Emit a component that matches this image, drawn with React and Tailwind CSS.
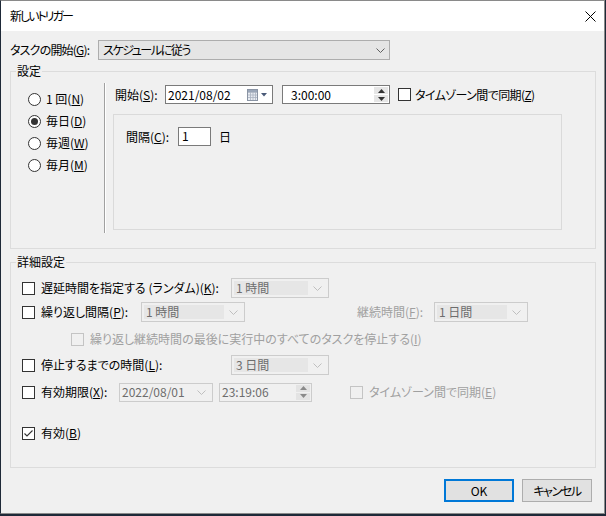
import React from 'react';

const font = "font-['Noto_Sans_CJK_JP',sans-serif] [font-feature-settings:'palt']";

function Chevron({ color = '#606060' }) {
  return (
    <svg width="9" height="5" viewBox="0 0 9 5">
      <path d="M0.5 0.5 L4.5 4.5 L8.5 0.5" fill="none" stroke={color} strokeWidth="1" />
    </svg>
  );
}

function Check({ checked, disabled }) {
  return (
    <span
      className={`w-[13px] h-[13px] border shrink-0 flex items-center justify-center ${
        disabled ? 'border-[#c4c4c4] bg-[#f0f0f0]' : 'border-[#333333] bg-white'
      }`}
    >
      {checked && (
        <svg width="11" height="11" viewBox="0 0 11 11">
          <path d="M1.5 5.5 L4 8 L9.5 2.5" fill="none" stroke="#333" strokeWidth="1.1" />
        </svg>
      )}
    </span>
  );
}

function Radio({ on, children }) {
  return (
    <div className="h-[22px] flex items-center">
      <span className="ml-[17px] w-[13px] h-[13px] rounded-full border border-[#333333] bg-white flex items-center justify-center">
        {on && <span className="w-[7px] h-[7px] rounded-full bg-[#333333]" />}
      </span>
      <span className="ml-[5px] leading-[16px]">{children}</span>
    </div>
  );
}

function DisabledSelect({ w, value }) {
  return (
    <div className={`${w} h-[20px] border border-[#cccccc] bg-[#f0f0f0] flex items-center p-[2px]`}>
      <span className="flex-1 h-full bg-[#e6e6e6] pl-[2px] text-[#6d6d6d] leading-[14px] text-[12px]">{value}</span>
      <span className="w-[18px] flex justify-center">
        <Chevron color="#bfbfbf" />
      </span>
    </div>
  );
}

function Spin({ color, bg }) {
  return (
    <div className="w-[15px] h-full flex flex-col gap-[1px] py-[1px] pr-[1px]">
      <span className={`flex-1 ${bg} flex items-center justify-center`}>
        <svg width="7" height="4" viewBox="0 0 7 4"><path d="M0 4 L3.5 0 L7 4 Z" fill={color} /></svg>
      </span>
      <span className={`flex-1 ${bg} flex items-center justify-center`}>
        <svg width="7" height="4" viewBox="0 0 7 4"><path d="M0 0 L3.5 4 L7 0 Z" fill={color} /></svg>
      </span>
    </div>
  );
}

export default function App() {
  return (
    <div className={`w-[606px] h-[516px] bg-[#1e2938] text-[12px] text-black ${font}`}>
      <div className="w-[605px] h-[514px] bg-[#f0f0f0] border border-[#8a8a8a] border-l-[#1e2938] flex flex-col">
        {/* title bar */}
        <div className="h-[30px] bg-white flex items-center pl-[9px] pr-[6px] shrink-0">
          <span className="leading-[16px] tracking-[-2px]">新しいトリガー</span>
          <span className="ml-auto w-[16px] flex justify-center">
            <svg width="11" height="11" viewBox="0 0 11 11">
              <path d="M0.5 0.5 L10.5 10.5 M10.5 0.5 L0.5 10.5" stroke="#000" strokeWidth="1" />
            </svg>
          </span>
        </div>

        <div className="pl-[9px] flex flex-col">
          {/* start of task */}
          <div className="mt-[9px] h-[20px] flex items-center">
            <span className="w-[88px] leading-[16px] tracking-[-0.8px]">
              タスクの開始(<u>G</u>):
            </span>
            <div className="w-[292px] h-[20px] border border-[#adadad] bg-[#e5e5e5] flex items-center pl-[4px] pr-[4px]">
              <span className="leading-[16px] tracking-[-1.4px]">スケジュールに従う</span>
              <span className="ml-auto">
                <Chevron />
              </span>
            </div>
          </div>

          {/* 設定 group */}
          <div className="relative mt-[11px] w-[586px] h-[178px] border border-[#dcdcdc] flex">
            <span className="absolute -top-[9px] left-[5px] px-[1px] bg-[#f0f0f0] leading-[16px]">設定</span>
            <div className="w-[93px] pt-[16px] flex flex-col">
              <Radio>1 回(<u>N</u>)</Radio>
              <Radio on>毎日(<u>D</u>)</Radio>
              <Radio>毎週(<u>W</u>)</Radio>
              <Radio>毎月(<u>M</u>)</Radio>
            </div>
            <div className="mt-[11px] h-[150px] w-[2px] border-l border-[#a0a0a0] border-r border-r-white" />
            <div className="flex flex-col">
              <div className="mt-[13px] h-[19px] flex items-center">
                <span className="ml-[9px] w-[50px] leading-[16px]">
                  開始(<u>S</u>):
                </span>
                <div className="w-[108px] h-[19px] border border-[#7a7a7a] bg-white flex items-center pl-[2px] pr-[4px]">
                  <span className="leading-[16px]">2021/08/02</span>
                  <svg className="ml-auto" width="21" height="12" viewBox="0 0 21 12">
                    <rect x="0.5" y="0.5" width="10" height="11" fill="#e8ecf2" stroke="#8a94a4" />
                    <path d="M1 3.5 H10 M1 6 H10 M1 8.5 H10 M3.5 3 V11 M6 3 V11 M8.5 3 V11" stroke="#a9b2c0" strokeWidth="0.8" />
                    <rect x="1" y="1" width="9" height="2" fill="#9aa6b8" />
                    <path d="M14 4 L20 4 L17 7.5 Z" fill="#4a5a78" />
                  </svg>
                </div>
                <div className="ml-[9px] w-[108px] h-[19px] border border-[#7a7a7a] bg-white flex items-center">
                  <span className="pl-[8px] leading-[16px]">3:00:00</span>
                  <div className="ml-auto h-full">
                    <Spin color="#333333" bg="bg-[#e6e6e6]" />
                  </div>
                </div>
                <span className="ml-[8px]">
                  <Check />
                </span>
                <span className="ml-[4px] leading-[16px] tracking-[-0.6px]">
                  タイムゾーン間で同期(<u>Z</u>)
                </span>
              </div>
              <div className="mt-[10px] ml-[7px] w-[449px] h-[116px] border border-[#dadada] flex flex-col">
                <div className="mt-[12px] h-[19px] flex items-center">
                  <span className="ml-[12px] w-[52px] leading-[16px]">
                    間隔(<u>C</u>):
                  </span>
                  <div className="w-[33px] h-[19px] border border-[#7a7a7a] bg-white pl-[3px] leading-[16px]">1</div>
                  <span className="ml-[8px] leading-[16px]">日</span>
                </div>
              </div>
            </div>
          </div>

          {/* 詳細設定 group */}
          <div className="relative mt-[13px] w-[586px] h-[206px] border border-[#dcdcdc] flex flex-col">
            <span className="absolute -top-[9px] left-[5px] px-[1px] bg-[#f0f0f0] leading-[16px]">詳細設定</span>

            <div className="mt-[14px] h-[22px] flex items-center">
              <span className="ml-[11px]"><Check /></span>
              <span className="ml-[6px] w-[190px] leading-[16px]">
                遅延時間を指定する (ランダム)(<u>K</u>):
              </span>
              <DisabledSelect w="w-[98px]" value="1 時間" />
            </div>

            <div className="mt-[2px] h-[22px] flex items-center">
              <span className="ml-[11px]"><Check /></span>
              <span className="ml-[6px] w-[100px] leading-[16px]">
                繰り返し間隔(<u>P</u>):
              </span>
              <DisabledSelect w="w-[104px]" value="1 時間" />
              <span className="ml-[112px] w-[77px] leading-[16px] text-[#a0a0a0]">
                継続時間(<u>F</u>):
              </span>
              <DisabledSelect w="w-[94px]" value="1 日間" />
            </div>

            <div className="mt-[5px] h-[22px] flex items-center">
              <span className="ml-[60px]"><Check disabled /></span>
              <span className="ml-[6px] leading-[16px] text-[#a0a0a0]">
                繰り返し継続時間の最後に実行中のすべてのタスクを停止する(<u>I</u>)
              </span>
            </div>

            <div className="mt-[4px] h-[22px] flex items-center">
              <span className="ml-[11px]"><Check /></span>
              <span className="ml-[6px] w-[190px] leading-[16px]">
                停止するまでの時間(<u>L</u>):
              </span>
              <DisabledSelect w="w-[98px]" value="3 日間" />
            </div>

            <div className="mt-[5px] h-[22px] flex items-center">
              <span className="ml-[11px]"><Check /></span>
              <span className="ml-[6px] w-[78px] leading-[16px]">
                有効期限(<u>X</u>):
              </span>
              <div className="w-[94px] h-[19px] border border-[#cccccc] bg-[#f0f0f0] flex items-center pl-[2px] pr-[6px]">
                <span className="leading-[16px] text-[#6d6d6d]">2022/08/01</span>
                <span className="ml-auto"><Chevron color="#bfbfbf" /></span>
              </div>
              <div className="ml-[6px] w-[93px] h-[19px] border border-[#cccccc] bg-[#f0f0f0] flex items-center">
                <span className="pl-[2px] leading-[16px] text-[#6d6d6d]">23:19:06</span>
                <div className="ml-auto h-full">
                  <Spin color="#8a8a8a" bg="bg-[#e3e3e3]" />
                </div>
              </div>
              <span className="ml-[38px]"><Check disabled /></span>
              <span className="ml-[6px] leading-[16px] text-[#a0a0a0]">
                タイムゾーン間で同期(<u>E</u>)
              </span>
            </div>

            <div className="mt-[19px] h-[22px] flex items-center">
              <span className="ml-[11px]"><Check checked /></span>
              <span className="ml-[6px] leading-[16px]">
                有効(<u>B</u>)
              </span>
            </div>
          </div>

          {/* buttons */}
          <div className="mt-[11px] pr-[12px] flex justify-end gap-[8px]">
            <button className="w-[70px] h-[23px] border-2 border-[#0078d7] bg-[#e1e1e1] flex items-center justify-center leading-[16px]">
              OK
            </button>
            <button className="w-[70px] h-[23px] border border-[#adadad] bg-[#e1e1e1] flex items-center justify-center leading-[16px] tracking-[-1.4px]">
              キャンセル
            </button>
          </div>
        </div>
      </div>
    </div>
  );
}
